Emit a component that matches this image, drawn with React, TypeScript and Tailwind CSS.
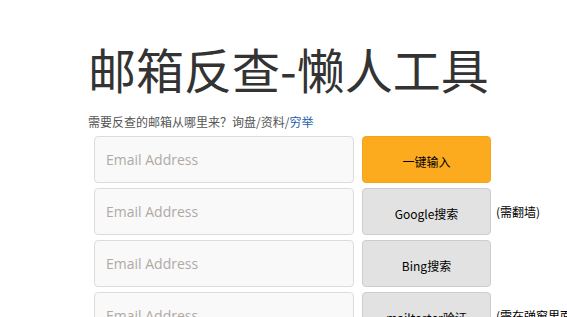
import React from 'react';

const rows = [
  { label: '一键输入', primary: true, note: '' },
  { label: 'Google搜索', primary: false, note: '(需翻墙)' },
  { label: 'Bing搜索', primary: false, note: '' },
  { label: 'mailtester验证', primary: false, note: '(需在弹窗里面操作)' },
];

const cjk = { fontFamily: '"Noto Sans CJK SC", sans-serif' };

const App: React.FC = () => {
  return (
    <div
      className="w-[567px] h-[317px] overflow-hidden bg-white text-[#333]"
      style={{ fontFamily: '"Open Sans", "Noto Sans CJK SC", sans-serif' }}
    >
      <div className="pl-[88px] pt-[37px]">
        <h1 className="text-[48px] leading-[62px] font-normal whitespace-nowrap" style={cjk}>
          邮箱反查-懒人工具
        </h1>
        <p className="mt-[15px] text-[12px] leading-[16px] text-[#555] whitespace-nowrap" style={cjk}>
          需要反查的邮箱从哪里来？询盘/资料/<span className="text-[#1a5fa8]">穷举</span>
        </p>
        <div className="pl-[6px] pt-[6px] flex flex-col gap-[5px]">
          {rows.map((row, i) => (
            <div key={i} className="flex items-center whitespace-nowrap">
              <input
                placeholder="Email Address"
                className="shrink-0 w-[260px] h-[47px] rounded-[4px] border border-[#dcdcdc] bg-[#f9f9f9] px-[11px] text-[14px] placeholder:text-[#b0a9a4] outline-none"
              />
              <button
                className={`shrink-0 ml-[8px] w-[129px] h-[47px] pt-[4px] rounded-[4px] text-[12px] text-black ${
                  row.primary ? 'bg-[#fdab1e] border border-[#f5a41a]' : 'bg-[#e2e2e2] border border-[#cdcdcd]'
                }`}
                style={cjk}
              >
                {row.label}
              </button>
              {row.note && (
                <span className="shrink-0 ml-[5px] text-[12px] text-black" style={cjk}>
                  {row.note}
                </span>
              )}
            </div>
          ))}
        </div>
      </div>
    </div>
  );
};

export default App;
